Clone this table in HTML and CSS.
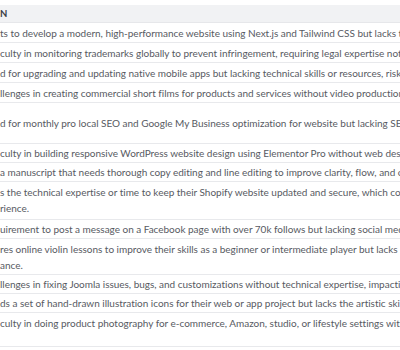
FILE: index.html
```html
<!DOCTYPE html>
<html lang="en">
<head>
<meta charset="utf-8">
<title>Descriptions</title>
<link rel="stylesheet" href="styles.css">
</head>
<body>
<div class="table">
  <div class="head">N</div>
  <div class="row h20">ts to develop a modern, high-performance website using Next.js and Tailwind CSS but lacks the expertise to build it</div>
  <div class="row h20">culty in monitoring trademarks globally to prevent infringement, requiring legal expertise not possessed</div>
  <div class="row h20">d for upgrading and updating native mobile apps but lacking technical skills or resources, risking</div>
  <div class="row h20">llenges in creating commercial short films for products and services without video production skills</div>
  <div class="row h41">d for monthly pro local SEO and Google My Business optimization for website but lacking SEO skills</div>
  <div class="row h19">culty in building responsive WordPress website design using Elementor Pro without web design skills</div>
  <div class="row h19">a manuscript that needs thorough copy editing and line editing to improve clarity, flow, and overall quality</div>
  <div class="row h37 wrap">s the technical expertise or time to keep their Shopify website updated and secure, which could harm user<br>rience.</div>
  <div class="row h19">uirement to post a message on a Facebook page with over 70k follows but lacking social media skills</div>
  <div class="row h36 wrap">res online violin lessons to improve their skills as a beginner or intermediate player but lacks a teacher<br>ance.</div>
  <div class="row h19">llenges in fixing Joomla issues, bugs, and customizations without technical expertise, impacting</div>
  <div class="row h19">ds a set of hand-drawn illustration icons for their web or app project but lacks the artistic skills</div>
  <div class="row h34 last">culty in doing product photography for e-commerce, Amazon, studio, or lifestyle settings without</div>
</div>
</body>
</html>
```
FILE: styles.css
```css
html, body {
  margin: 0;
  padding: 0;
  background: #ffffff;
}
body {
  width: 400px;
  height: 350px;
  overflow: hidden;
  font-family: "Lato", "Liberation Sans", sans-serif;
  font-size: 10px;
  letter-spacing: -0.02px;
  color: #575a62;
}
.table {
  padding-top: 5px;
  display: flex;
  flex-direction: column;
}
.head {
  height: 18px;
  box-sizing: border-box;
  background: #f1f2f4;
  border-bottom: 1px solid #e6e7ea;
  display: flex;
  align-items: center;
  font-size: 9.5px;
  font-weight: 700;
  color: #3b3e45;
  letter-spacing: 0.3px;
}
.row {
  box-sizing: border-box;
  border-bottom: 1px solid #e8e9ec;
  display: flex;
  align-items: center;
  white-space: nowrap;
  overflow: hidden;
  line-height: 16px;
}
.wrap { align-items: flex-start; padding-top: 2px; }
.h20 { height: 20px; }
.h19 { height: 19px; }
.h41 { height: 41px; }
.h37 { height: 38px; }
.h36 { height: 36px; }
.h34 { height: 34px; align-items: flex-start; padding-top: 2px; }
```
